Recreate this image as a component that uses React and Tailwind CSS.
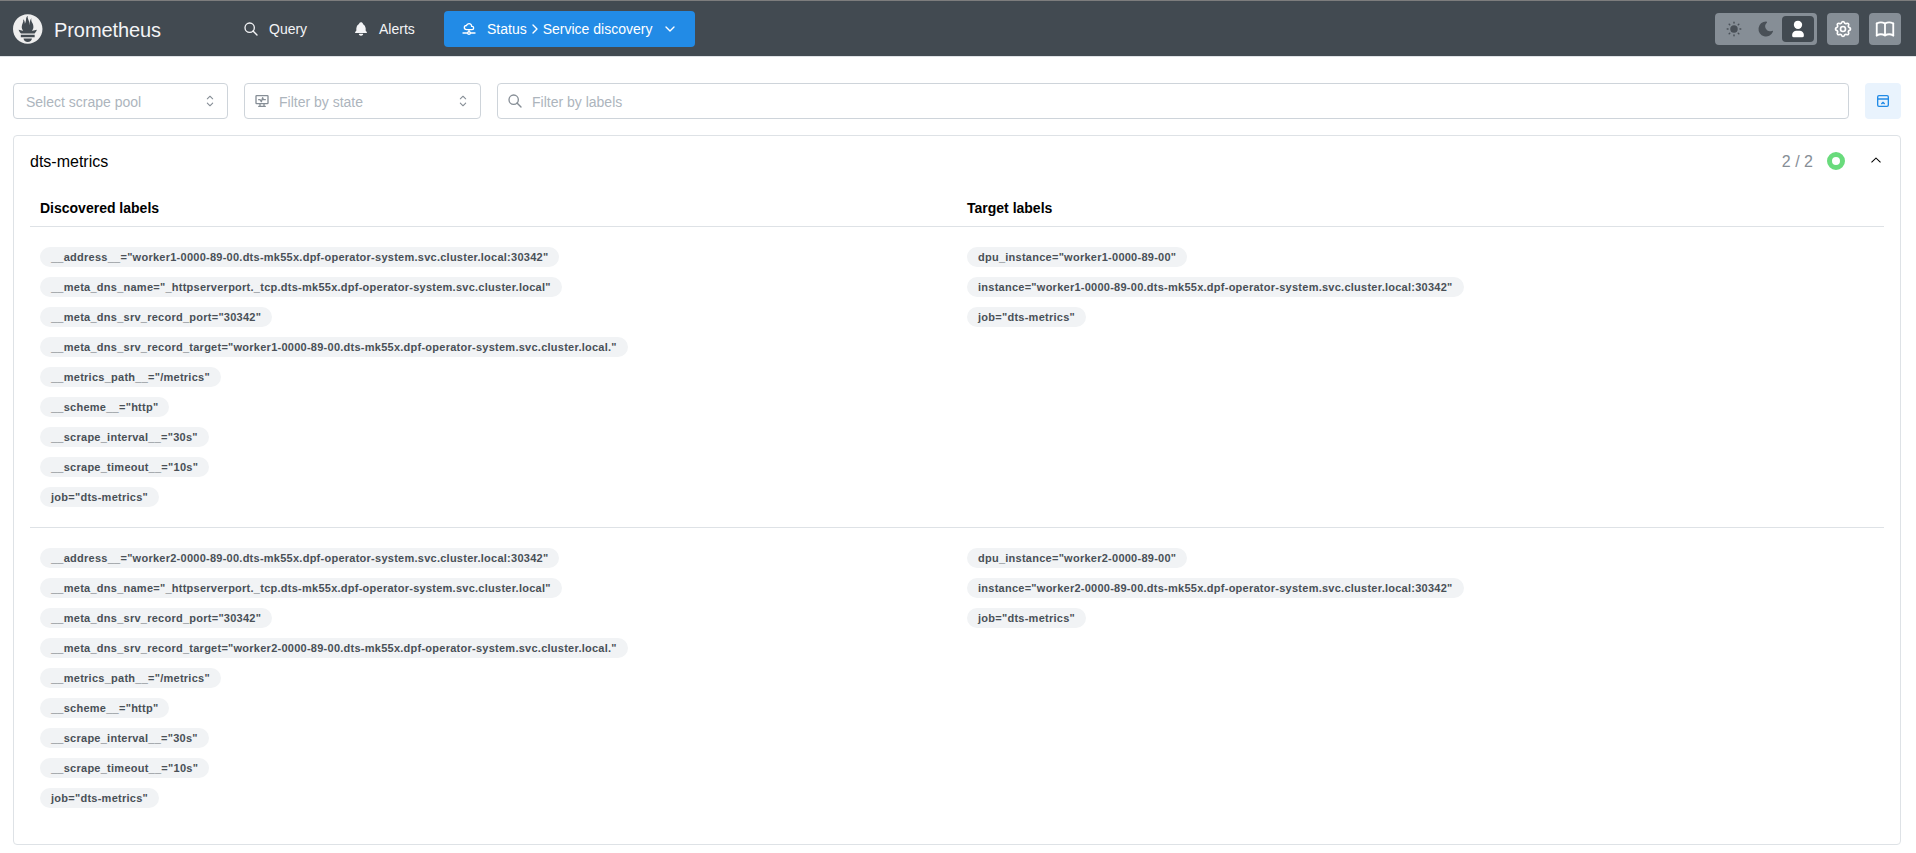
import {
  TbBellFilled,
  TbBook,
  TbChevronDown,
  TbChevronRight,
  TbCloudDataConnection,
  TbHeartRateMonitor,
  TbLayoutNavbarCollapse,
  TbMoonFilled,
  TbSearch,
  TbSettings,
  TbSunFilled,
  TbUserFilled,
} from "react-icons/tb";

const discoveredLabels = (worker) => [
  `__address__="${worker}-0000-89-00.dts-mk55x.dpf-operator-system.svc.cluster.local:30342"`,
  `__meta_dns_name="_httpserverport._tcp.dts-mk55x.dpf-operator-system.svc.cluster.local"`,
  `__meta_dns_srv_record_port="30342"`,
  `__meta_dns_srv_record_target="${worker}-0000-89-00.dts-mk55x.dpf-operator-system.svc.cluster.local."`,
  `__metrics_path__="/metrics"`,
  `__scheme__="http"`,
  `__scrape_interval__="30s"`,
  `__scrape_timeout__="10s"`,
  `job="dts-metrics"`,
];

const targetLabels = (worker) => [
  `dpu_instance="${worker}-0000-89-00"`,
  `instance="${worker}-0000-89-00.dts-mk55x.dpf-operator-system.svc.cluster.local:30342"`,
  `job="dts-metrics"`,
];

const targets = ["worker1", "worker2"].map((worker) => ({
  worker,
  discovered: discoveredLabels(worker),
  target: targetLabels(worker),
}));

function PrometheusLogo() {
  return (
    <svg width="30" height="30" viewBox="0 0 115.333 114" fill="#eee">
      <path d="M56.667.667C25.372.667 0 26.036 0 57.332c0 31.295 25.372 56.666 56.667 56.666s56.666-25.371 56.666-56.666C113.333 26.036 87.961.667 56.667.667zm0 106.055c-8.904 0-16.123-5.948-16.123-13.283H72.79c0 7.334-7.219 13.283-16.123 13.283zM83.297 89.04H30.034v-9.658h53.264v9.658zm-.191-14.629h-52.92c-.176-.203-.356-.403-.526-.609-5.452-6.62-6.736-10.076-7.983-13.598-.021-.116 6.611 1.355 11.314 2.413 0 0 2.42.56 5.958 1.205-3.397-3.982-5.414-9.044-5.414-14.218 0-11.359 8.712-21.285 5.569-29.308 3.059.249 6.331 6.456 6.552 16.161 3.252-4.494 4.613-12.701 4.613-17.733 0-5.21 3.433-11.262 6.867-11.469-3.061 5.045.793 9.37 4.219 20.099 1.285 4.03 1.121 10.812 2.113 15.113C63.797 33.534 65.333 20.5 71 16c-2.5 5.667.37 12.758 2.333 16.167 3.167 5.5 5.087 9.667 5.087 17.548 0 5.284-1.951 10.259-5.242 14.148 3.742-.702 6.326-1.335 6.326-1.335l12.152-2.371c.002-.001-1.765 7.261-8.55 14.254z" />
    </svg>
  );
}

function SelectorIcon() {
  return (
    <svg width="18" height="18" viewBox="0 0 15 15" fill="#868e96" fillRule="evenodd">
      <path d="M4.93179 5.43179C4.75605 5.60753 4.75605 5.89245 4.93179 6.06819C5.10753 6.24392 5.39245 6.24392 5.56819 6.06819L7.49999 4.13638L9.43179 6.06819C9.60753 6.24392 9.89245 6.24392 10.0682 6.06819C10.2439 5.89245 10.2439 5.60753 10.0682 5.43179L7.81819 3.18179C7.73379 3.0974 7.61933 3.04999 7.49999 3.04999C7.38064 3.04999 7.26618 3.0974 7.18179 3.18179L4.93179 5.43179ZM10.0682 9.56819C10.2439 9.39245 10.2439 9.10753 10.0682 8.93179C9.89245 8.75606 9.60753 8.75606 9.43179 8.93179L7.49999 10.8636L5.56819 8.93179C5.39245 8.75606 5.10753 8.75606 4.93179 8.93179C4.75605 9.10753 4.75605 9.39245 4.93179 9.56819L7.18179 11.8182C7.35753 11.9939 7.64245 11.9939 7.81819 11.8182L10.0682 9.56819Z" />
    </svg>
  );
}

function AccordionChevron() {
  return (
    <svg width="16" height="16" viewBox="0 0 15 15" fill="#000" fillRule="evenodd" className="rotate-180">
      <path d="M3.13523 6.15803C3.3241 5.95657 3.64052 5.94637 3.84197 6.13523L7.5 9.56464L11.158 6.13523C11.3595 5.94637 11.6759 5.95657 11.8648 6.15803C12.0536 6.35949 12.0434 6.67591 11.842 6.86477L7.84197 10.6148C7.64964 10.7951 7.35036 10.7951 7.15803 10.6148L3.15803 6.86477C2.95657 6.67591 2.94637 6.35949 3.13523 6.15803Z" />
    </svg>
  );
}

function Header() {
  return (
    <header className="flex h-[57px] items-center justify-between border-t border-b border-t-[#7d7d7d] border-b-[#dee2e6] bg-[#424a51] pr-[15px] pl-[13px] text-white">
      <div className="flex items-center">
        <PrometheusLogo />
        <span className="ml-[11px] w-[110px] pt-[3px] text-[20px] leading-[31px] tracking-[-0.08px] text-gray-100">Prometheus</span>
        <nav className="ml-[63px] flex items-center text-sm text-gray-100">
          <a className="flex h-9 w-[95px] items-center gap-[10px] pl-4">
            <TbSearch size={16} />
            Query
          </a>
          <a className="ml-[15px] flex h-9 w-[95px] items-center gap-[10px] pl-4">
            <TbBellFilled size={16} />
            Alerts
          </a>
          <button className="ml-3 flex h-9 w-[251px] items-center rounded bg-[#228be6] pl-[17px] text-white">
            <TbCloudDataConnection size={16} />
            <span className="ml-[10px] flex items-center whitespace-nowrap">
              Status
              <TbChevronRight size={16} />
              Service discovery
            </span>
            <TbChevronDown size={16} className="ml-[10px]" />
          </button>
        </nav>
      </div>
      <div className="flex items-center gap-[10px]">
        <div className="flex h-8 w-[102px] items-center rounded bg-[#868e96] p-[3px] text-[#495057]">
          <span className="flex h-[26px] w-8 items-center justify-center">
            <TbSunFilled size={18} />
          </span>
          <span className="flex h-[26px] w-8 items-center justify-center">
            <TbMoonFilled size={18} />
          </span>
          <span className="flex h-[26px] w-8 items-center justify-center rounded bg-[#424a51] text-white">
            <TbUserFilled size={20} />
          </span>
        </div>
        <button className="flex size-8 items-center justify-center rounded bg-[#868e96]">
          <TbSettings size={20} />
        </button>
        <button className="flex size-8 items-center justify-center rounded bg-[#868e96]">
          <TbBook size={22} />
        </button>
      </div>
    </header>
  );
}

function Filters() {
  return (
    <div className="flex gap-4 text-sm text-[#adb5bd]">
      <div className="flex h-9 w-[215px] items-center justify-between rounded border border-[#ced4da] pr-2 pl-3">
        <span className="pt-0.5">Select scrape pool</span>
        <SelectorIcon />
      </div>
      <div className="flex h-9 w-[237px] items-center rounded border border-[#ced4da] pr-2 pl-[9px]">
        <TbHeartRateMonitor size={16} className="text-[#868e96]" />
        <span className="ml-[9px] flex-1 pt-0.5">Filter by state</span>
        <SelectorIcon />
      </div>
      <div className="flex h-9 flex-1 items-center rounded border border-[#ced4da] pl-[9px]">
        <TbSearch size={16} className="text-[#868e96]" />
        <span className="ml-[9px] pt-0.5">Filter by labels</span>
      </div>
      <button className="flex size-9 items-center justify-center rounded bg-[#e9f3fd] text-[#228be6]">
        <TbLayoutNavbarCollapse size={16} />
      </button>
    </div>
  );
}

function LabelBadges({ labels }) {
  return (
    <div className="flex w-1/2 flex-col items-start gap-[10px] px-[10px]">
      {labels.map((label) => (
        <span
          key={label}
          className="h-5 rounded-full bg-[#f1f3f5] px-[11px] text-[11px] leading-5 font-bold tracking-[0.255px] whitespace-nowrap text-[#495057]"
        >
          {label}
        </span>
      ))}
    </div>
  );
}

export default function App() {
  return (
    <div className="min-h-screen bg-white font-['Liberation_Sans',Arial,sans-serif] text-black">
      <Header />
      <main className="pt-[26px] pr-[15px] pl-[13px]">
        <Filters />
        <section className="mt-4 h-[710px] rounded border border-[#dee2e6] px-4">
          <div className="flex h-[50px] items-center justify-between">
            <h2 className="pt-px text-base">dts-metrics</h2>
            <div className="flex items-center">
              <span className="pt-px text-base text-[#868e96]">2 / 2</span>
              <span className="ml-[14px] size-[18px] rounded-full border-5 border-[#69db7c]" />
              <span className="ml-[23px]">
                <AccordionChevron />
              </span>
            </div>
          </div>
          <div className="flex h-[41px] border-b border-[#dee2e6] pt-3 text-sm font-bold">
            <div className="w-1/2 px-[10px]">Discovered labels</div>
            <div className="w-1/2 px-[10px]">Target labels</div>
          </div>
          {targets.map((t) => (
            <div key={t.worker} className="flex border-b border-[#dee2e6] py-5 last:border-b-0">
              <LabelBadges labels={t.discovered} />
              <LabelBadges labels={t.target} />
            </div>
          ))}
        </section>
      </main>
    </div>
  );
}
